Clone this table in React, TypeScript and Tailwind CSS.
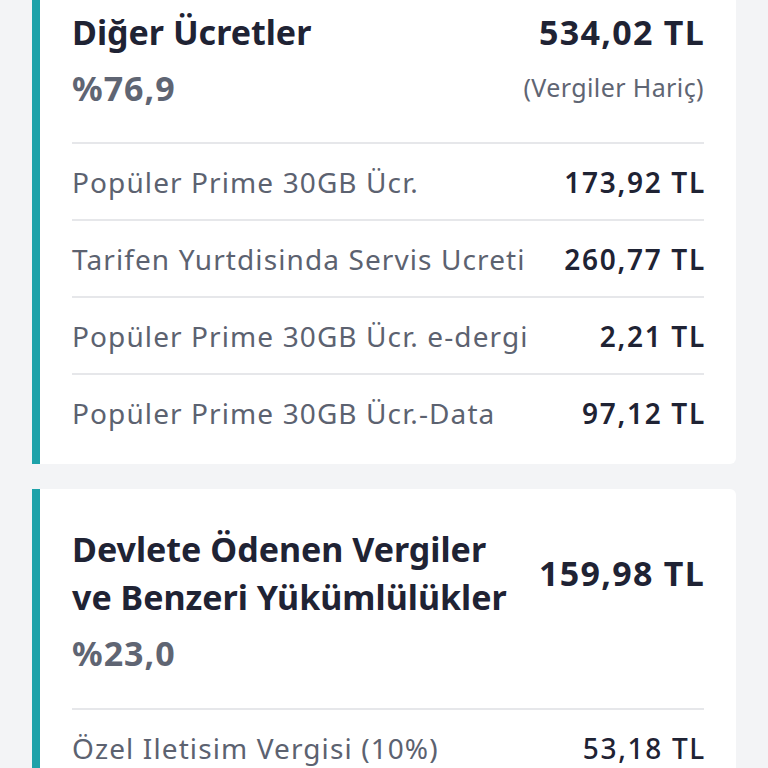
import React from 'react';

type Row = { label: string; amount: string; strong?: boolean };

const others: Row[] = [
    { label: 'Popüler Prime 30GB Ücr.', amount: '173,92 TL', strong: true },
    { label: 'Tarifen Yurtdisinda Servis Ucreti', amount: '260,77 TL', strong: true },
    { label: 'Popüler Prime 30GB Ücr. e-dergi', amount: '2,21 TL', strong: true },
    { label: 'Popüler Prime 30GB Ücr.-Data', amount: '97,12 TL', strong: true },
];

const taxes: Row[] = [{ label: 'Özel Iletisim Vergisi (10%)', amount: '53,18 TL' }];

function Rows({ rows }: { rows: Row[] }) {
    return (
        <ul>
            {rows.map((r) => (
                <li
                    key={r.label}
                    className="flex h-[77px] items-center justify-between border-t-2 border-[#e6e7ea]"
                >
                    <span className="text-[28px] tracking-[1.1px] text-[#5c6270]">{r.label}</span>
                    <span
                        className={
                            r.strong
                                ? '-mr-[2px] text-[28px] font-semibold tracking-[1.7px] text-[#1f2334]'
                                : '-mr-[2px] text-[28px] font-medium tracking-[1.7px] text-[#1f2334]'
                        }
                    >
                        {r.amount}
                    </span>
                </li>
            ))}
        </ul>
    );
}

export default function App() {
    return (
        <div
            className="min-h-screen overflow-hidden bg-[#f3f4f6] px-8"
            style={{ fontFamily: '"Noto Sans", Lato, sans-serif' }}
        >
            <div className="-mt-[28px] flex flex-col gap-[25px]">
                <section className="rounded-r-md border-l-[8px] border-[#1ea2a9] bg-white pl-8 pr-8 pb-[14px] pt-[40px]">
                    <div className="flex items-start justify-between">
                        <h2 className="text-[34px] font-bold leading-[40px] text-[#1f2334]">Diğer Ücretler</h2>
                        <div className="-mr-[1px] text-[34px] font-bold leading-[40px] tracking-[1.3px] text-[#1f2334]">
                            534,02 TL
                        </div>
                    </div>
                    <div className="mt-[16px] flex items-center justify-between pb-[34px]">
                        <div className="text-[34px] font-bold leading-[40px] tracking-[1px] text-[#5f6573]">%76,9</div>
                        <div className="text-[25px] tracking-[0.4px] text-[#5f6573]">(Vergiler Hariç)</div>
                    </div>
                    <Rows rows={others} />
                </section>

                <section className="rounded-r-md border-l-[8px] border-[#1ea2a9] bg-white pl-8 pr-8 pt-[36px]">
                    <div className="flex items-center justify-between gap-6">
                        <h2 className="text-[34px] font-bold leading-[48px] text-[#1f2334]">
                            Devlete Ödenen Vergiler
                            <br />
                            ve Benzeri Yükümlülükler
                        </h2>
                        <div className="-mr-[1px] shrink-0 text-[34px] font-bold leading-[40px] tracking-[1.3px] text-[#1f2334]">
                            159,98 TL
                        </div>
                    </div>
                    <div className="mt-[12px] pb-[35px] text-[34px] font-bold leading-[40px] tracking-[1px] text-[#5f6573]">
                        %23,0
                    </div>
                    <Rows rows={taxes} />
                </section>
            </div>
        </div>
    );
}
